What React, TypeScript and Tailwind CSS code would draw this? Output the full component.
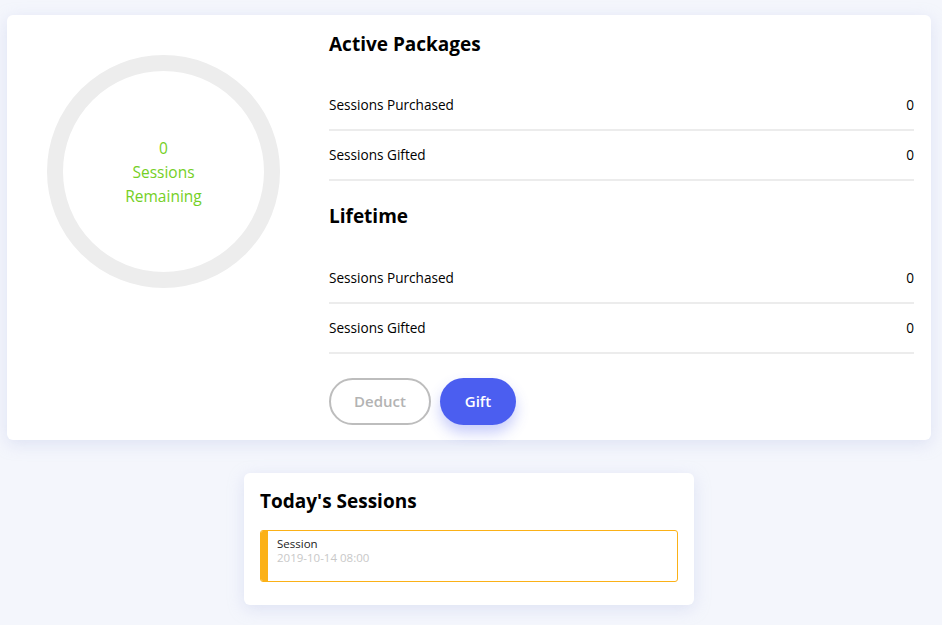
import React from "react";

const font = { fontFamily: '"Open Sans", "Noto Sans", sans-serif' };

function Row({ label, value }: { label: string; value: string }) {
  return (
    <div className="flex h-[50px] items-center justify-between border-b-2 border-[#ececec] text-[13.6px] text-black">
      <span>{label}</span>
      <span>{value}</span>
    </div>
  );
}

export default function App() {
  return (
    <div className="min-h-[625px] w-[942px] bg-[#f4f6fc] pt-[15px]" style={font}>
      <div className="mx-[7px] w-[924px] rounded-[6px] bg-white shadow-[0_4px_16px_rgba(180,190,230,0.35)] flex pb-[15px]">
        <div className="w-[322px] flex justify-start pl-[40px] pt-[40px]">
          <div className="relative h-[233px] w-[233px] rounded-full border-[16px] border-[#ededed] flex flex-col items-center justify-center text-[15.5px] leading-[24px] text-[#74cf25]">
            <span>0</span>
            <span>Sessions</span>
            <span>Remaining</span>
          </div>
        </div>
        <div className="flex-1 pr-[17px] pt-[18px]">
          <h2 className="text-[19px] font-bold leading-[22px] text-black">Active Packages</h2>
          <div className="mt-[26px]">
            <Row label="Sessions Purchased" value="0" />
            <Row label="Sessions Gifted" value="0" />
          </div>
          <h2 className="mt-[24px] text-[19px] font-bold leading-[22px] text-black">Lifetime</h2>
          <div className="mt-[27px]">
            <Row label="Sessions Purchased" value="0" />
            <Row label="Sessions Gifted" value="0" />
          </div>
          <div className="mt-[24px] flex gap-[9px]">
            <button className="h-[47px] w-[102px] rounded-full border-2 border-[#bdbdbd] text-[15px] font-semibold text-[#b3b3b3]">
              Deduct
            </button>
            <button className="h-[47px] w-[76px] rounded-full bg-[#4b5ef0] text-[15px] font-semibold text-white shadow-[0_8px_14px_rgba(75,94,240,0.3)]">
              Gift
            </button>
          </div>
        </div>
      </div>
      <div className="mt-[33px] pl-[244px]">
        <div className="w-[450px] rounded-[6px] bg-white px-[16px] pt-[16px] pb-[23px] shadow-[0_4px_16px_rgba(180,190,230,0.35)]">
          <h2 className="text-[19px] font-bold leading-[24px] text-black">Today's Sessions</h2>
          <div className="mt-[17px] flex h-[52px] overflow-hidden rounded-[3px] border border-[#fbb117]">
            <div className="w-[7px] bg-[#fbb117]" />
            <div className="pl-[9px] pt-[6px]">
              <div className="text-[11.5px] leading-[14px] text-[#222]">Session</div>
              <div className="text-[11.5px] leading-[14px] text-[#c8c8c8]">2019-10-14 08:00</div>
            </div>
          </div>
        </div>
      </div>
    </div>
  );
}
